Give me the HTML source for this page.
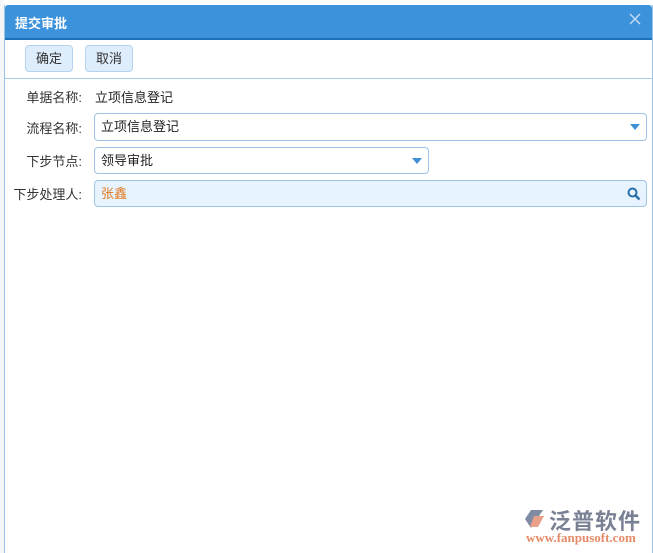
<!DOCTYPE html>
<html><head><meta charset="utf-8"><style>
body{margin:0;width:653px;height:553px;background:#fff;font-family:"Liberation Sans","Noto Sans CJK SC",sans-serif;position:relative;overflow:hidden}
.dlg{position:absolute;left:4px;top:5px;width:647px;height:548px;background:#fff;border-left:1px solid #9cc3e6;border-right:1px solid #9cc3e6}
.hd{position:absolute;left:0;top:0;right:0;height:33px;background:#3d92dc;border-bottom:2px solid #1d6fb8;border-radius:3px 3px 0 0}
.hd span{position:absolute;left:10px;top:8px;color:#fff;font-weight:bold;font-size:13px}
.x{position:absolute;right:10px;top:7px}
.tb{position:absolute;left:0;right:0;top:35px;height:38px;border-bottom:1px solid #a7cbea}
.btn{position:absolute;top:5px;height:25px;width:46px;background:#deedfb;border:1px solid #b5d3ee;border-radius:4px;color:#333;font-size:13px;text-align:center;line-height:25px}
.lb{position:absolute;font-size:13px;color:#333;text-align:right;width:80px}
.v{position:absolute;font-size:13px;color:#222}
.f{position:absolute;height:26px;border:1px solid #9fc4e6;border-radius:4px;background:#fff;font-size:13px;line-height:26px;padding-left:6px;box-sizing:border-box;color:#222}
.arr{position:absolute;right:6px;top:10px;width:0;height:0;border-left:5px solid transparent;border-right:5px solid transparent;border-top:6px solid #3d8fd6}
</style></head><body>
<div style="position:absolute;left:0;top:0;width:4px;height:553px;background:#f4f6f8"></div>
<div class="dlg">
<div class="hd"><span>提交审批</span><svg class="x" width="14" height="14" viewBox="0 0 14 14"><path d="M2 2L12 12M12 2L2 12" stroke="#c9def3" stroke-width="1.4"/></svg></div>
<div class="tb"><div class="btn" style="left:20px">确定</div><div class="btn" style="left:80px">取消</div></div>
</div>
<div class="lb" style="left:2px;top:87px">单据名称:</div>
<div class="v" style="left:95px;top:87px">立项信息登记</div>
<div class="lb" style="left:2px;top:118px">流程名称:</div>
<div class="f" style="left:94px;top:113px;width:553px;height:28px;line-height:26px">立项信息登记<div class="arr"></div></div>
<div class="lb" style="left:2px;top:151px">下步节点:</div>
<div class="f" style="left:94px;top:147px;width:335px;height:27px">领导审批<div class="arr"></div></div>
<div class="lb" style="left:0px;top:184px;width:82px">下步处理人:</div>
<div class="f" style="left:94px;top:180px;width:553px;height:27px;background:#e7f3fe;color:#e07a20">张鑫
<svg style="position:absolute;right:5px;top:6px" width="14" height="14" viewBox="0 0 14 14"><circle cx="5.5" cy="5.5" r="4" fill="none" stroke="#2a6fa8" stroke-width="2"/><path d="M8.5 8.5L12.5 12.5" stroke="#2a6fa8" stroke-width="2.4"/></svg></div>
<svg style="position:absolute;left:523px;top:508px" width="24" height="22" viewBox="0 0 24 22"><path d="M2 11L8 2H20L14 11L8 20Z" fill="#7f8aa3"/><path d="M11 8h10l-6 11H7z" fill="#e8a088"/></svg>
<div style="position:absolute;left:549px;top:504px;font-size:22px;color:#7a8194;font-weight:bold;letter-spacing:1px">泛普软件</div>
<div style="position:absolute;left:526px;top:530px;font-size:13px;color:#e58b68;font-family:'Liberation Serif',serif;font-weight:bold">www.fanpusoft.com</div>
</body></html>
